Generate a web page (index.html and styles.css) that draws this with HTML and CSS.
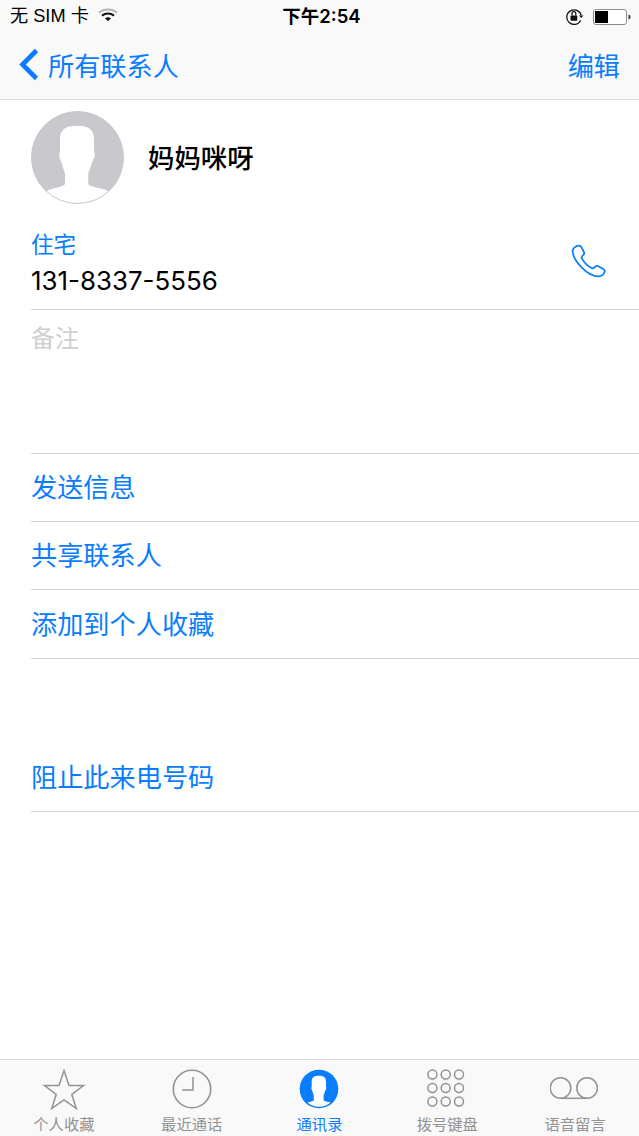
FILE: index.html
```html
<!DOCTYPE html>
<html lang="zh-CN">
<head>
<meta charset="utf-8">
<title>联系人</title>
<link rel="stylesheet" href="styles.css">
</head>
<body>
<div class="phone">
  <header class="top">
    <div class="status">
      <div class="status-left">
        <span class="carrier">无 SIM 卡</span>
        <svg class="wifi" width="20" height="14" viewBox="0 0 20 14"><path d="M1 4.600C6 .4 14 .4 19 4.600" fill="none" stroke="#b5b5b5" stroke-width="2"/><path d="M4 7.600C7.500 4.800 12.500 4.800 16 7.600" fill="none" stroke="#111" stroke-width="2"/><path d="M7 10.200c1.800-1.300 4.200-1.300 6 0l-3 3z" fill="#111"/></svg>
      </div>
      <span class="clock">下午2:54</span>
      <div class="status-right">
        <svg class="lock" width="18" height="17" viewBox="1 .5 16 15"><path d="M14 11.500A6.500 6.500 0 1 1 14.500 7" fill="none" stroke="#111" stroke-width="1.100"/><path d="M12.500 7h4l-2 2.400z" fill="#111"/><rect x="5" y="7" width="6" height="4.800" rx=".6" fill="#111"/><path d="M6.300 7V5.400a1.700 1.700 0 0 1 3.400 0V7" fill="none" stroke="#111" stroke-width="1.100"/></svg>
        <svg class="battery" width="38" height="16" viewBox="0 0 38 16"><rect x=".5" y=".5" width="33" height="15" rx="2.500" fill="#fff" stroke="#8c8c8c"/><rect x="2" y="2" width="13" height="12" fill="#000"/><path d="M35.500 5.500c1.500.4 2 1.300 2 2.500s-.5 2.100-2 2.500z" fill="#333"/></svg>
      </div>
    </div>
    <nav class="nav">
      <div class="back">
        <svg class="chevron" width="22" height="33" viewBox="1 0 22 33"><path d="M18.500 2.500 4.500 16.500l14 14" fill="none" stroke="#0a7dff" stroke-width="4.600"/></svg>
        <span>所有联系人</span>
      </div>
      <span class="edit">编辑</span>
    </nav>
  </header>

  <main class="content">
    <section class="profile">
      <svg class="avatar" width="93" height="93" viewBox="0 0 93 93">
        <defs><clipPath id="avatar-clip"><circle cx="46.500" cy="46.500" r="46"/></clipPath></defs>
        <circle cx="46.500" cy="46.500" r="46" fill="#c8c8cd"/>
        <g clip-path="url(#avatar-clip)">
          <path d="M46 14.700C35 14.700 29 18 29 28V40.700L28 44C28.500 47 29.500 49 30.700 52C31.500 56 33 59 34 62V73C32 76.500 22 76.500 15.700 80L8 100H85L77.300 80C71 76.500 59.500 76.500 57.300 73V62C58.500 59 60 56 60.700 52C62 49 63.500 47 64 44L63 40.700V28C63 18 57 14.700 46 14.700Z" fill="#fff"/>
        </g>
        <circle cx="46.500" cy="46.500" r="46" fill="none" stroke="#c8c8cd"/>
      </svg>
      <h1 class="name">妈妈咪呀</h1>
    </section>

    <section class="phone-row">
      <div class="phone-text">
        <div class="label">住宅</div>
        <div class="number">131-8337-5556</div>
      </div>
      <svg class="call" width="36" height="36" viewBox="1.500 1 32.500 32.500"><path d="M3 6.500C4 4 7 2.500 8.500 2.500c1.500 0 2.300 1 3 2.500l1.800 3.500c.5 1.200-.3 2.300-1.300 3-1 .8-1.200 1.800-.5 2.900 1.900 3.300 5 6.400 8.500 8.300 1 .6 2 .3 2.700-.6.800-1 1.800-1.700 3-1.200l4.500 2.400c1.400.8 2.100 1.700 1.700 2.800-.7 2-2.800 4-5.400 4.100C17 30.500 2.500 16 3 6.500z" fill="none" stroke="#0a7dff" stroke-width="1.600"/></svg>
    </section>

    <section class="notes">备注</section>

    <section class="actions">
      <div class="action">发送信息</div>
      <div class="action">共享联系人</div>
      <div class="action tall">添加到个人收藏</div>
    </section>

    <section class="block">
      <div class="action tall">阻止此来电号码</div>
    </section>
  </main>

  <footer class="tabs">
    <div class="tab">
      <svg width="44" height="42" viewBox="0 0 44 42"><path d="M22 2.500 27 17.500H41.500L29.800 26.500 34.300 40.500 22 32 9.700 40.500 14.200 26.500 2.500 17.500H17z" fill="none" stroke="#929292" stroke-width="1.500"/></svg>
      <span>个人收藏</span>
    </div>
    <div class="tab">
      <svg width="44" height="42" viewBox="0 0 44 42"><circle cx="22" cy="21" r="18.700" fill="none" stroke="#929292" stroke-width="1.600"/><path d="M23 9V22H12" fill="none" stroke="#929292" stroke-width="1.500"/></svg>
      <span>最近通话</span>
    </div>
    <div class="tab active">
      <svg width="44" height="42" viewBox="0 0 44 42">
        <defs><clipPath id="tab-clip"><circle cx="22" cy="21" r="17.800"/></clipPath></defs>
        <circle cx="22" cy="21" r="19.300" fill="#0a7dff"/>
        <g clip-path="url(#tab-clip)">
          <path transform="translate(2.500 1.500) scale(.42)" d="M46 14.700C35 14.700 29 18 29 28V40.700L28 44C28.500 47 29.500 49 30.700 52C31.500 56 33 59 34 62V73C32 76.500 22 76.500 15.700 80L8 100H85L77.300 80C71 76.500 59.500 76.500 57.300 73V62C58.500 59 60 56 60.700 52C62 49 63.500 47 64 44L63 40.700V28C63 18 57 14.700 46 14.700Z" fill="#fff"/>
        </g>
      </svg>
      <span>通讯录</span>
    </div>
    <div class="tab">
      <svg width="44" height="42" viewBox="0 0 44 42">
        <g fill="none" stroke="#929292" stroke-width="1.500">
          <circle cx="7.400" cy="6.500" r="4.500"/><circle cx="20.700" cy="6.500" r="4.500"/><circle cx="34" cy="6.500" r="4.500"/>
          <circle cx="7.400" cy="20" r="4.500"/><circle cx="20.700" cy="20" r="4.500"/><circle cx="34" cy="20" r="4.500"/>
          <circle cx="7.400" cy="33.500" r="4.500"/><circle cx="20.700" cy="33.500" r="4.500"/><circle cx="34" cy="33.500" r="4.500"/>
        </g>
      </svg>
      <span>拨号键盘</span>
    </div>
    <div class="tab">
      <svg width="50" height="42" viewBox="0 0 50 42"><g fill="none" stroke="#929292" stroke-width="1.500"><circle cx="10.500" cy="20" r="10.300"/><circle cx="37.100" cy="20" r="10.300"/><path d="M10.500 30.300h26.600"/></g></svg>
      <span>语音留言</span>
    </div>
  </footer>
</div>
</body>
</html>
```

FILE: styles.css
```css
* { box-sizing: border-box; }
html, body { margin: 0; padding: 0; }
body {
  background: #fff;
  font-family: "Liberation Sans", "Noto Sans CJK SC", sans-serif;
  color: #000;
}
.phone {
  width: 639px;
  height: 1136px;
  display: flex;
  flex-direction: column;
  overflow: hidden;
}
.top {
  height: 100px;
  flex: none;
  background: #f9f9f9;
  border-bottom: 1px solid #dcdcdc;
}
.status {
  height: 33px;
  padding: 0 8px 0 10px;
  display: grid;
  grid-template-columns: 1fr auto 1fr;
  align-items: center;
}
.status-left { display: flex; align-items: center; gap: 9px; }
.carrier { font-size: 18.200px; line-height: 33px; }
.wifi { margin-top: -3px; }
.clock {
  font-family: "Inter", "Noto Sans CJK SC", sans-serif;
  font-size: 18.500px;
  font-weight: 600;
  line-height: 33px;
  margin-left: 2px;
}
.status-right { display: flex; justify-content: flex-end; align-items: center; gap: 9px; }
.nav {
  height: 66px;
  padding: 0 19px 3px;
  display: flex;
  justify-content: space-between;
  align-items: center;
  color: #0a7dff;
  font-size: 26.200px;
}
.back { display: flex; align-items: center; gap: 7px; }
.chevron { display: block; }
.content { flex: 1; }
.profile {
  height: 115px;
  padding: 11px 0 0 31px;
  display: flex;
  align-items: flex-start;
  gap: 24px;
}
.avatar { display: block; flex: none; }
.name {
  margin: 0;
  font-size: 26.400px;
  line-height: 36px;
  font-weight: 500;
  padding-top: 30px;
}
.phone-row {
  height: 95px;
  margin-left: 31px;
  padding: 15px 32px 0 0;
  border-bottom: 1px solid #d4d4d6;
  display: flex;
  justify-content: space-between;
  align-items: flex-start;
}
.label { color: #0a7dff; font-size: 22.500px; line-height: 32px; }
.number {
  font-family: "Inter", "Liberation Sans", sans-serif;
  font-size: 25.900px;
  line-height: 38px;
}
.call { margin-top: 14px; }
.notes {
  height: 144px;
  margin-left: 31px;
  padding-top: 13px;
  font-size: 24px;
  line-height: 32px;
  color: #cfcfd3;
  border-bottom: 1px solid #d4d4d6;
}
.action {
  height: 68px;
  margin-left: 31px;
  padding-bottom: 4px;
  border-bottom: 1px solid #d4d4d6;
  color: #0a7dff;
  font-size: 26.200px;
  display: flex;
  align-items: center;
}
.action.tall { height: 69px; padding-bottom: 2px; }
.block { margin-top: 84px; }
.tabs {
  height: 77px;
  flex: none;
  background: #f9f9f9;
  border-top: 1px solid #dcdcdc;
  display: grid;
  grid-template-columns: repeat(5, 1fr);
}
.tab {
  display: flex;
  flex-direction: column;
  align-items: center;
  color: #929292;
  font-size: 15.300px;
  line-height: 20px;
  padding-top: 8px;
}
.tab svg { display: block; height: 42px; margin-bottom: 5px; }
.tab.active { color: #0a7dff; }
```
